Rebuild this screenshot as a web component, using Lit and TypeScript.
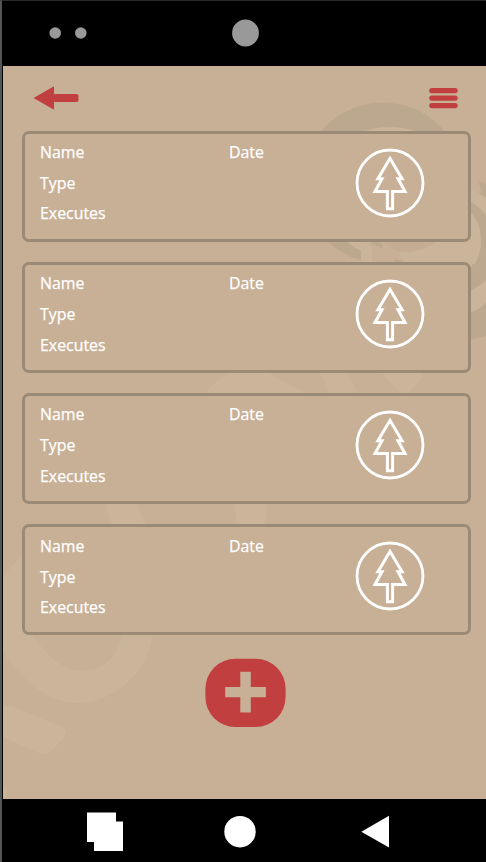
import { LitElement, css, html } from "lit";
import { customElement } from "lit/decorators.js";

@customElement("entry-card")
class EntryCard extends LitElement {
  static styles = css`
    :host {
      display: flex;
      box-sizing: border-box;
      height: 111px;
      border: 3px solid #9b8a76;
      border-radius: 7px;
      background: #c8b097;
      color: #fff;
      font: 500 17px/30.8px "Open Sans", "Noto Sans", sans-serif;
      -webkit-text-stroke: 0.25px #fff;
      padding: 3.3px 0 0 15.5px;
    }
    .labels {
      width: 189px;
      display: flex;
      flex-direction: column;
    }
    .date {
      width: 125.5px;
    }
    .text {
      display: block;
      height: 30.8px;
      width: max-content;
      transform-origin: 0 50%;
      transform: scaleX(0.935);
    }
    svg {
      display: block;
      margin-top: 10.7px;
    }
  `;
  render() {
    return html`
      <div class="labels">
        <span class="text">Name</span>
        <span class="text">Type</span>
        <span class="text">Executes</span>
      </div>
      <div class="date"><span class="text">Date</span></div>
      <svg width="70" height="70" viewBox="0 0 70 70" fill="none" stroke="#fff">
        <circle cx="35" cy="35" r="33" stroke-width="2.8" />
        <path
          d="M35 10.4 22.9 30.8H27L20 43.5H32.4V60.8H37.6V43.5H50L43 30.8H47.1Z"
          stroke-width="3"
        />
      </svg>
    `;
  }
}

@customElement("app-root")
class AppRoot extends LitElement {
  static styles = css`
    :host {
      display: flex;
      flex-direction: column;
      box-sizing: border-box;
      width: 486px;
      height: 862px;
      overflow: hidden;
      background: #000;
      border-left: 2px solid #555;
      border-top: 1px solid #2b2b2b;
    }
    svg {
      display: block;
    }
    .status {
      height: 65px;
      flex: none;
    }
    .screen {
      position: relative;
      height: 733px;
      flex: none;
      margin-left: 1px;
      background: #c8b097;
      overflow: hidden;
    }
    .watermark {
      position: absolute;
      inset: 0;
    }
    .content {
      position: relative;
      display: flex;
      flex-direction: column;
      align-items: center;
    }
    .toolbar {
      align-self: stretch;
      display: flex;
      justify-content: space-between;
      box-sizing: border-box;
      padding: 19px 28px 0 30px;
      height: 64.6px;
    }
    .list {
      align-self: stretch;
      display: flex;
      flex-direction: column;
      gap: 20.3px;
      margin: 0 15px 0 18.5px;
    }
    .add {
      margin: 23px 0 0 2px;
    }
    .nav {
      height: 63px;
      flex: none;
    }
  `;
  render() {
    return html`
      <div class="status">
        <svg width="484" height="65" viewBox="2 1 484 65" fill="#999">
          <circle cx="55.2" cy="33" r="5.8" />
          <circle cx="80.8" cy="33" r="5.8" />
          <circle cx="245.5" cy="33" r="13.4" />
        </svg>
      </div>
      <main class="screen">
        <svg class="watermark" width="483" height="733" viewBox="3 66 483 733">
          <g fill="#bca88e">
            <circle cx="383" cy="183" r="80.6" />
            <path d="M479 181 486 184V350H465V195L481 193Z" />
          </g>
          <g fill="#cab59b">
            <path d="M365 131Q390 123 415 131V150H365Z" />
            <path d="M465 188Q478 191 486 198V215Q479 206 465 198Z" />
            <path d="M465 207Q481 220 481 240Q481 256 465 275Z" />
            <path d="M465 315Q477 311 486 303V280Q478 288 465 293Z" />
            <path d="M465 341 486 336V351H465Z" fill="#c8b097" />
          </g>
          <path d="M361 241H486V263H361Z" fill="#c8b097" />
          <path d="M481 241H486V263H475Q481 253 481 241Z" fill="#bca88e" />
          <path d="M383 241H438Q420 254 399 252Q390 248 383 241Z" fill="#c4ad92" />
          <path d="M369 241H381L383 249Q375 246 369 241Z" fill="#bca88e" />
          <path d="M394 259 403 261 406 264H395Z" fill="#bca88e" />
          <g fill="#cab59b">
            <path d="M344 239Q356 250 361 250L361 264H373L371 255L373 253L368 241Z" />
            <path d="M399 252Q420 254 438 241H481Q481 253 475 264H406Q400 258 399 252Z" />
            <path d="M263 370Q287 383 309 395H207Q207 387 230 372Z" />
            <path d="M319 371H346L359 395H331Z" />
            <path d="M380 371H423Q422 380 418 382L407 395H402Z" />
            <path d="M106 503H137Q140 516 148 526H112Q107 516 106 503Z" />
            <path d="M233 503H267Q267 516 264 526H236Q237 514 233 503Z" />
            <path
              d="M25 555Q11 564 3 578V652C24 683 50 703 78 703C112 703 147 674 153 634H122C118 655 104 671 84 671C64 671 48 658 32 634H25Z"
            />
            <path d="M3 705.5Q12 706 18 709L62 727Q68 730 66 734Q58 745 50 752Q45 755 41 754L3 737Z" />
            <path d="M3 786Q8 791 7 793Q6 797 3 798Z" />
          </g>
        </svg>
        <div class="content">
          <div class="toolbar">
            <svg width="46" height="26" viewBox="0 0 46 26" fill="#c13f3e">
              <path d="M0.5 13 21 1.2V24.8Z" />
              <rect x="20" y="9" width="25.5" height="8" rx="2" />
            </svg>
            <svg width="29" height="26" viewBox="0 0 29 26" fill="#c13f3e">
              <rect x="0.2" y="2.9" width="28.5" height="5.3" rx="2.65" />
              <rect x="0.2" y="10.4" width="28.5" height="5.3" rx="2.65" />
              <rect x="0.2" y="17.9" width="28.5" height="5.3" rx="2.65" />
            </svg>
          </div>
          <div class="list">
            ${[1, 2, 3, 4].map(() => html`<entry-card></entry-card>`)}
          </div>
          <svg class="add" width="82" height="70" viewBox="0 0 82 70">
            <rect x="0.4" y="0.7" width="80.2" height="68.4" rx="30" fill="#c13f3e" />
            <path
              d="M35.3 13.8h10.5v15.2h15.1v10.3h-15.1v15.2h-10.5v-15.2h-15.1v-10.3h15.1Z"
              fill="#c8b097"
            />
          </svg>
        </div>
      </main>
      <div class="nav">
        <svg width="484" height="63" viewBox="2 799 484 63" fill="#fff">
          <path d="M87 812.5h29v9h7v29.5H94v-9H87Z" />
          <circle cx="240" cy="831.7" r="15.7" />
          <path d="M361.3 831.7 389 815.7V847.5Z" />
        </svg>
      </div>
    `;
  }
}
